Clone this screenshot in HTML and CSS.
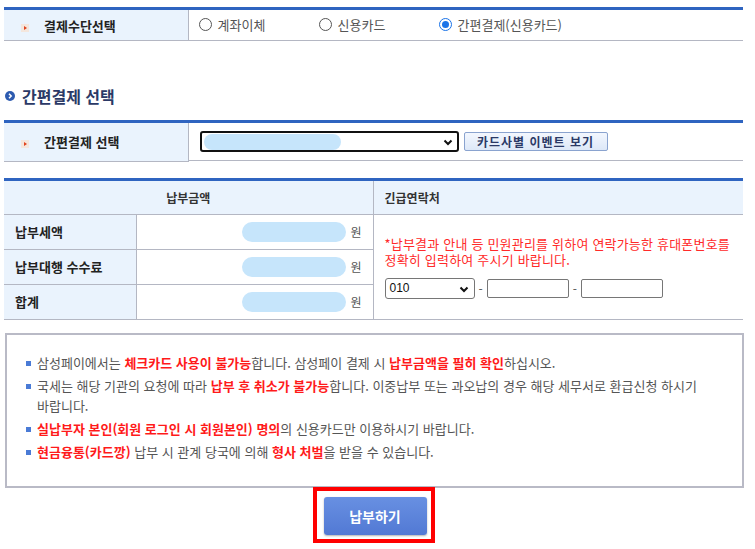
FILE: index.html
```html
<!DOCTYPE html>
<html lang="ko">
<head>
<meta charset="utf-8">
<link rel="stylesheet" href="styles.css">
</head>
<body>
<div class="page">
  <table class="form-table t1">
    <tr>
      <th class="lbl"><span class="arrow"></span>결제수단선택</th>
      <td class="radios">
        <label class="radio"><span class="rb"></span>계좌이체</label><label class="radio"><span class="rb"></span>신용카드</label><label class="radio"><span class="rb on"></span>간편결제(신용카드)</label>
      </td>
    </tr>
  </table>

  <h2 class="sec-title"><span class="sec-ico"><svg width="10" height="10" viewBox="0 0 10 10"><circle cx="5" cy="5" r="5" fill="#2d5bb0"/><path d="M4 2.8 L6.2 5 L4 7.2" stroke="#fff" stroke-width="1.5" fill="none"/></svg></span>간편결제 선택</h2>

  <table class="form-table t2">
    <tr>
      <th class="lbl"><span class="arrow"></span>간편결제 선택</th>
      <td class="sel-cell">
        <div class="fake-select"><span class="blob b1"></span><svg class="chev" width="10" height="7" viewBox="0 0 10 7"><path d="M1.5 1.5 L5 5 L8.5 1.5" stroke="#111" stroke-width="2" fill="none"/></svg></div>
        <button class="evt-btn">카드사별 이벤트 보기</button>
      </td>
    </tr>
  </table>

  <table class="form-table t3">
    <colgroup><col class="col-a"><col class="col-b"><col class="col-c"></colgroup>
    <tr class="hdr">
      <th colspan="2" class="c-amt">납부금액</th>
      <th class="c-contact">긴급연락처</th>
    </tr>
    <tr>
      <th class="rl">납부세액</th>
      <td class="val"><span class="blob b2"></span><span class="won">원</span></td>
      <td rowspan="3" class="contact">
        <p class="warn">*납부결과 안내 등 민원관리를 위하여 연락가능한 휴대폰번호를 정확히 입력하여 주시기 바랍니다.</p>
        <div class="phone">
          <div class="ph-sel">010<svg class="chev2" width="10" height="7" viewBox="0 0 10 7"><path d="M1.5 1.5 L5 5 L8.5 1.5" stroke="#111" stroke-width="2" fill="none"/></svg></div>
          <span class="dash">-</span>
          <span class="ph-in"></span>
          <span class="dash">-</span>
          <span class="ph-in"></span>
        </div>
      </td>
    </tr>
    <tr>
      <th class="rl">납부대행 수수료</th>
      <td class="val"><span class="blob b2"></span><span class="won">원</span></td>
    </tr>
    <tr>
      <th class="rl">합계</th>
      <td class="val"><span class="blob b2"></span><span class="won">원</span></td>
    </tr>
  </table>

  <div class="notice">
    <ul>
      <li>삼성페이에서는 <b>체크카드 사용이 불가능</b>합니다. 삼성페이 결제 시 <b>납부금액을 필히 확인</b>하십시오.</li>
      <li>국세는 해당 기관의 요청에 따라 <b>납부 후 취소가 불가능</b>합니다. 이중납부 또는 과오납의 경우 해당 세무서로 환급신청 하시기 바랍니다.</li>
      <li><b>실납부자 본인(회원 로그인 시 회원본인) 명의</b>의 신용카드만 이용하시기 바랍니다.</li>
      <li><b>현금융통(카드깡)</b> 납부 시 관계 당국에 의해 <b>형사 처벌</b>을 받을 수 있습니다.</li>
    </ul>
  </div>

  <div class="submit-wrap">
    <div class="hl"><button class="submit">납부하기</button></div>
  </div>
</div>
</body>
</html>
```

FILE: styles.css
```css
* { box-sizing: border-box; }
html, body { margin: 0; padding: 0; background: #fff; }
body {
  font-family: "Noto Sans CJK KR", "Noto Sans", sans-serif;
  font-size: 12px;
  color: #444;
}
.page { width: 739px; margin-left: 4px; padding-top: 7px; }

.form-table {
  width: 739px;
  border-collapse: collapse;
  border-top: 3px solid #2f64c0;
}
.form-table th, .form-table td {
  border-bottom: 1px solid #b4b7c3;
  padding: 0;
}
.lbl {
  width: 184px;
  height: 32px;
  background: #eaf3fd;
  border-right: 1px solid #b4b7c3;
  text-align: left;
  font-weight: bold;
  font-size: 13px;
  color: #222;
  padding-left: 17px !important;
}
.arrow {
  display: inline-block;
  width: 8px; height: 8px;
  margin-right: 15px;
  vertical-align: -1px;
  background: #f4e6dd;
  position: relative;
}
.arrow::after {
  content: "";
  position: absolute;
  left: 3px; top: 2px;
  border-left: 3px solid #e0421e;
  border-top: 2px solid transparent;
  border-bottom: 2px solid transparent;
}
.radios { padding-left: 10px !important; font-size: 13px; color: #555; }
.radio { display: inline-flex; align-items: center; }
.radio:nth-child(1) { width: 120px; }
.radio:nth-child(2) { width: 120px; }
.rb {
  width: 13px; height: 13px;
  border: 1px solid #555;
  border-radius: 50%;
  margin-right: 6px;
  position: relative;
}
.rb.on { border: 1px solid #1a73e8; }
.rb.on::after {
  content: "";
  position: absolute;
  left: 2px; top: 2px;
  width: 7px; height: 7px;
  border-radius: 50%;
  background: #1a73e8;
}

.sec-title {
  margin: 43px 0 0 1px;
  height: 24px;
  font-size: 16px;
  font-weight: bold;
  color: #2b3966;
  display: flex;
  align-items: center;
}
.sec-ico { display: inline-flex; margin-right: 7px; }
.t2 { margin-top: 12px; }
.t2 .lbl { height: 37px; }
.sel-cell { padding-left: 11px !important; display: flex; align-items: center; height: 38px; }
.fake-select {
  width: 259px; height: 21px;
  border: 2px solid #111;
  border-radius: 3px;
  position: relative;
}
.blob {
  display: block;
  background: #c6e5fb;
  border-radius: 10px;
  filter: blur(0.6px);
}
.b1 { position: absolute; left: 2px; top: 1px; width: 137px; height: 16px; }
.chev { position: absolute; right: 4px; top: 6px; }
.evt-btn {
  margin-left: 5px;
  height: 19px;
  width: 144px;
  padding: 0;
  border: 1px solid #8aa3cf;
  border-radius: 2px;
  background: linear-gradient(#f3f7fe, #dde8f8);
  font-family: inherit;
  font-size: 12px;
  font-weight: bold;
  color: #2b3966;
  letter-spacing: 1px;
}

.t3 { margin-top: 16px; table-layout: fixed; }
.col-a { width: 132px; }
.col-b { width: 237px; }
.col-c { width: 370px; }
.t3 .hdr th {
  height: 35px;
  background: #eaf3fd;
  font-size: 12px;
  font-weight: bold;
  color: #333;
}
.c-amt { border-right: 1px solid #b4b7c3; text-align: center; }
.c-contact { text-align: left; padding-left: 11px !important; }
.rl {
  height: 35px;
  background: #eaf3fd;
  border-right: 1px solid #b4b7c3;
  text-align: left;
  padding-left: 11px !important;
  font-size: 13px;
  font-weight: bold;
  color: #222;
}
.val {
  border-right: 1px solid #b4b7c3;
  text-align: right;
  padding-right: 11px !important;
}
.b2 { display: inline-block; width: 104px; height: 20px; vertical-align: middle; }
.won { display: inline-block; margin-left: 4px; vertical-align: middle; color: #555; }
.contact { padding-left: 11px !important; vertical-align: top; }
.warn {
  margin: 21px 0 0 0;
  color: #ff2a2a;
  font-size: 13px;
  letter-spacing: 0.2px;
  line-height: 16px;
  width: 360px;
  word-break: keep-all;
}
.phone { display: flex; align-items: center; margin-top: 10px; }
.ph-sel {
  width: 90px; height: 21px;
  border: 1px solid #767676;
  border-radius: 3px;
  font-family: "Liberation Sans", Arial, sans-serif;
  font-size: 12px;
  color: #111;
  padding-left: 4px;
  line-height: 19px;
  position: relative;
}
.chev2 { position: absolute; right: 5px; top: 7px; }
.dash { margin: 0 4px; color: #555; }
.ph-in {
  display: inline-block;
  width: 82px; height: 19px;
  border: 1px solid #767676;
  border-radius: 2px;
}

.notice {
  margin: 13px 0 0 1px;
  width: 739px;
  height: 155px;
  border: 2px solid #b9bac6;
  padding: 18px 20px 0 19px;
}
.notice ul { list-style: none; margin: 0; padding: 0; }
.notice li {
  position: relative;
  padding-left: 11px;
  line-height: 20px;
  margin-bottom: 3px;
  font-size: 13px;
  color: #555;
  word-break: keep-all;
}
.notice li::before {
  content: "";
  position: absolute;
  left: 0; top: 8px;
  width: 5px; height: 5px;
  background: #4a7bd6;
}
.notice b { color: #ff1a1a; }

.submit-wrap { display: flex; justify-content: center; margin-top: -1px; }
.hl {
  border: 4px solid #ff0000;
  padding: 6px 4px 4px 7px;
}
.submit {
  width: 103px; height: 38px;
  border: none;
  border-radius: 3px;
  background: linear-gradient(#6890e2, #5279d4);
  box-shadow: 0 1px 2px rgba(0,0,0,.3);
  color: #fff;
  font-family: inherit;
  font-size: 14px;
  font-weight: bold;
}
```
